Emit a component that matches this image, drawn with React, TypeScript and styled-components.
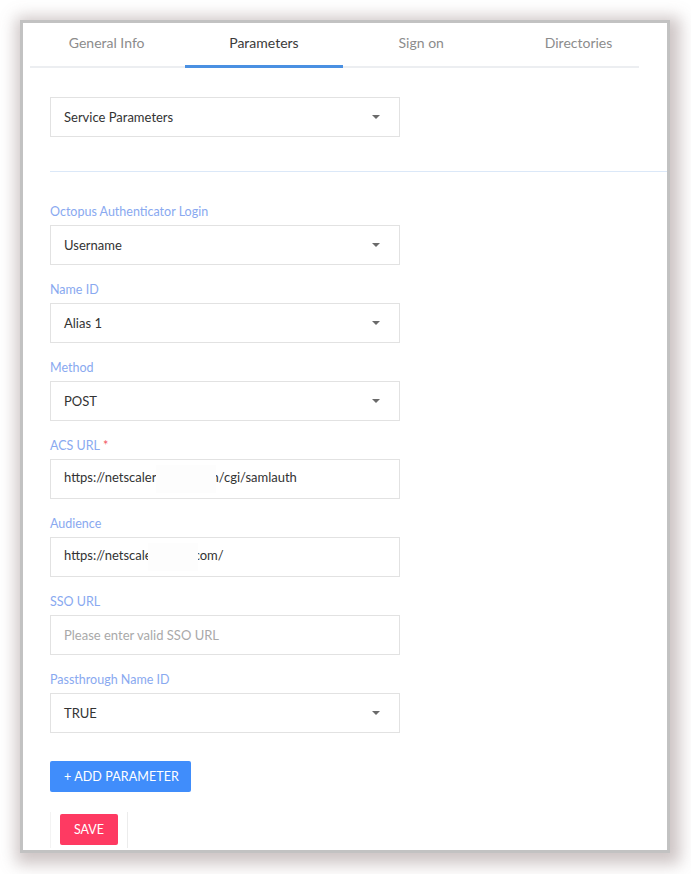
import React from 'react';
import styled, { createGlobalStyle } from 'styled-components';

const GlobalStyle = createGlobalStyle`
  html, body {
    margin: 0;
    padding: 0;
    background: #ffffff;
  }

  body {
    font-family: Lato, 'Noto Sans', sans-serif;
    color: #333333;
  }
`;

const Page = styled.div`
  padding: 20px 0 21px 20px;
`;

const Panel = styled.div`
  width: 644px;
  height: 827px;
  border: 3px solid #c2c2c2;
  background: #ffffff;
  box-shadow: 3px 4px 15px 7px rgba(135, 115, 115, 0.42);
  overflow: hidden;
`;

const TabBar = styled.div`
  margin-left: 7px;
  width: 609px;
  border-bottom: 2px solid #eceef1;
`;

const TabList = styled.div`
  display: flex;
  margin-left: -2px;
`;

const Tab = styled.div<{ $active?: boolean }>`
  flex: 0 0 157.3px;
  height: 45px;
  padding-top: 10px;
  box-sizing: border-box;
  text-align: center;
  font-size: 14px;
  line-height: 20px;
  color: ${(p) => (p.$active ? '#3a3a3a' : '#8c8c8c')};
  border-bottom: 3px solid ${(p) => (p.$active ? '#4a90e2' : 'transparent')};
  margin-bottom: -2px;
`;

const Content = styled.div`
  padding: 29px 0 0 27px;
`;

const Divider = styled.div`
  margin: 34px 0 32px;
  height: 1px;
  background: #dbe8f8;
`;

const Field = styled.div`
  width: 350px;
  margin-bottom: 17px;
`;

const Label = styled.div`
  font-size: 12.5px;
  line-height: 16px;
  height: 16px;
  margin-bottom: 5px;
  color: #89a9f0;
`;

const Required = styled.span`
  color: #f25561;
  margin-left: 3px;
`;

const Box = styled.div`
  position: relative;
  display: flex;
  align-items: center;
  height: 40px;
  box-sizing: border-box;
  padding: 0 19px 0 13px;
  border: 1px solid #e2e2e2;
  font-size: 13px;
  color: #333333;
  white-space: nowrap;
`;

const Value = styled.span<{ $placeholder?: boolean }>`
  flex: 1;
  color: ${(p) => (p.$placeholder ? '#a9a9a9' : '#333333')};
`;

const Caret = styled.span`
  width: 0;
  height: 0;
  border-left: 4px solid transparent;
  border-right: 4px solid transparent;
  border-top: 4px solid #6a6a6a;
`;

// blank block that hides part of a stored url
const Mask = styled.span<{ $w: number; $l: number; $r: number }>`
  position: relative;
  display: inline-block;
  vertical-align: middle;
  width: ${(p) => p.$w}px;
  height: 28px;
  margin-left: ${(p) => p.$l}px;
  margin-right: ${(p) => p.$r}px;
  background: #fdfdfd;
`;

const AddButton = styled.button`
  display: block;
  margin-top: 28px;
  width: 141px;
  height: 31px;
  border: none;
  border-radius: 2px;
  background: #408dfb;
  color: #ffffff;
  font-family: 'Liberation Sans Narrow', Lato, sans-serif;
  font-size: 12.5px;
  letter-spacing: 0.1px;
  padding: 0 0 0 2px;
`;

const SaveBar = styled.div`
  margin-top: 20px;
  display: inline-block;
  padding: 2px 9px 3px 9px;
  border-left: 1px solid #f3f3f3;
  border-right: 1px solid #ececec;
`;

const SaveButton = styled.button`
  display: block;
  width: 58px;
  height: 31px;
  border: none;
  border-radius: 2px;
  background: #fe3a62;
  color: #ffffff;
  font-family: Lato, sans-serif;
  font-size: 12.5px;
  padding: 0;
`;

const tabs = ['General Info', 'Parameters', 'Sign on', 'Directories'];

const SelectBox: React.FC<{ value: string }> = ({ value }) => (
  <Box>
    <Value>{value}</Value>
    <Caret />
  </Box>
);

export default function App() {
  return (
    <Page>
      <GlobalStyle />
      <Panel>
        <TabBar>
          <TabList>
            {tabs.map((t) => (
              <Tab key={t} $active={t === 'Parameters'}>
                {t}
              </Tab>
            ))}
          </TabList>
        </TabBar>

        <Content>
          <Field style={{ marginBottom: 0 }}>
            <SelectBox value="Service Parameters" />
          </Field>
          <Divider />

          <Field>
            <Label>Octopus Authenticator Login</Label>
            <SelectBox value="Username" />
          </Field>
          <Field>
            <Label>Name ID</Label>
            <SelectBox value="Alias 1" />
          </Field>
          <Field>
            <Label>Method</Label>
            <SelectBox value="POST" />
          </Field>
          <Field>
            <Label>
              ACS URL<Required>*</Required>
            </Label>
            <Box>
              <Value>
                https://netscaler
                <Mask $w={60} $l={0} $r={-5} />
                n/cgi/samlauth
              </Value>
            </Box>
          </Field>
          <Field>
            <Label>Audience</Label>
            <Box>
              <Value>
                https://netscale
                <Mask $w={50} $l={-4} $r={-4} />
                com/
              </Value>
            </Box>
          </Field>
          <Field>
            <Label>SSO URL</Label>
            <Box>
              <Value $placeholder>Please enter valid SSO URL</Value>
            </Box>
          </Field>
          <Field style={{ marginBottom: 0 }}>
            <Label>Passthrough Name ID</Label>
            <SelectBox value="TRUE" />
          </Field>

          <AddButton>+ ADD PARAMETER</AddButton>
          <SaveBar>
            <SaveButton>SAVE</SaveButton>
          </SaveBar>
        </Content>
      </Panel>
    </Page>
  );
}
